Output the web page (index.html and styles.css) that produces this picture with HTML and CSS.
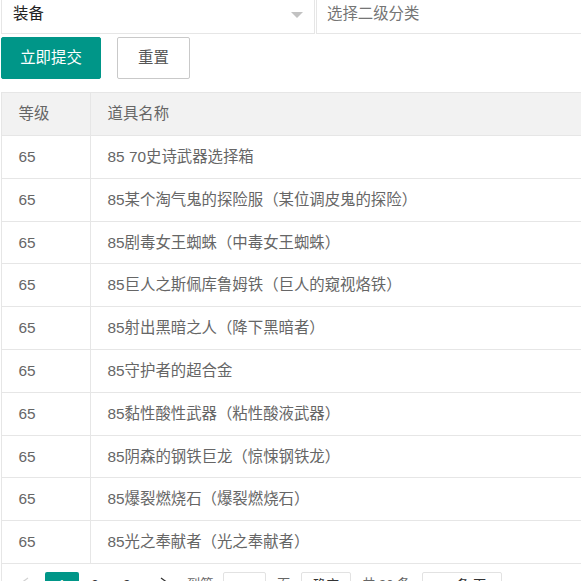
FILE: index.html
```html
<!DOCTYPE html>
<html lang="zh-CN">
<head>
<meta charset="utf-8">
<title>道具列表</title>
<link rel="stylesheet" href="styles.css">
</head>
<body>
<div class="page">
  <div class="form-row">
    <div class="select">
      <span class="select-value">装备</span>
      <i class="caret"></i>
    </div>
    <div class="input2">选择二级分类</div>
  </div>
  <div class="btn-row">
    <button class="btn btn-primary">立即提交</button>
    <button class="btn btn-default">重置</button>
  </div>
  <div class="table-box">
    <table class="data-table">
      <thead>
        <tr><th class="col-lv">等级</th><th class="col-name">道具名称</th></tr>
      </thead>
      <tbody>
        <tr><td class="col-lv">65</td><td class="col-name">85 70史诗武器选择箱</td></tr>
        <tr><td class="col-lv">65</td><td class="col-name">85某个淘气鬼的探险服（某位调皮鬼的探险）</td></tr>
        <tr><td class="col-lv">65</td><td class="col-name">85剧毒女王蜘蛛（中毒女王蜘蛛）</td></tr>
        <tr><td class="col-lv">65</td><td class="col-name">85巨人之斯佩库鲁姆铁（巨人的窥视烙铁）</td></tr>
        <tr><td class="col-lv">65</td><td class="col-name">85射出黑暗之人（降下黑暗者）</td></tr>
        <tr><td class="col-lv">65</td><td class="col-name">85守护者的超合金</td></tr>
        <tr><td class="col-lv">65</td><td class="col-name">85黏性酸性武器（粘性酸液武器）</td></tr>
        <tr><td class="col-lv">65</td><td class="col-name">85阴森的钢铁巨龙（惊悚钢铁龙）</td></tr>
        <tr><td class="col-lv">65</td><td class="col-name">85爆裂燃烧石（爆裂燃烧石）</td></tr>
        <tr><td class="col-lv">65</td><td class="col-name">85光之奉献者（光之奉献者）</td></tr>
      </tbody>
    </table>
    <div class="table-page">
      <span class="pg-prev"><svg width="9" height="12" viewBox="0 0 9 12"><polyline points="8,1 1,6 8,11" fill="none" stroke="#d2d2d2" stroke-width="1.3"/></svg></span>
      <span class="pg-curr">1</span>
      <span class="pg-num">2</span>
      <span class="pg-num">3</span>
      <span class="pg-next"><svg width="9" height="12" viewBox="0 0 9 12"><polyline points="1,1 8,6 1,11" fill="none" stroke="#333" stroke-width="1.3"/></svg></span>
      <span class="pg-text pg-to">到第</span>
      <span class="pg-input">1</span>
      <span class="pg-text pg-page">页</span>
      <span class="pg-btn">确定</span>
      <span class="pg-text pg-count">共 30 条</span>
      <span class="pg-limit">10 条/页</span>
    </div>
  </div>
</div>
</body>
</html>
```
FILE: styles.css
```css
html, body {
  margin: 0;
  padding: 0;
  overflow: hidden;
  background: #fff;
}
body {
  font-family: "Liberation Sans", "Noto Sans CJK SC", sans-serif;
  font-size: 15.4px;
  color: #666;
}
.page {
  padding-left: 1px;
  width: 640px;
}
.form-row {
  display: flex;
  margin-top: -8px;
}
.select {
  position: relative;
  box-sizing: border-box;
  width: 314px;
  height: 42px;
  border: 1px solid #e6e6e6;
  padding: 2px 0 0 11px;
  line-height: 38px;
  color: #222;
}
.caret {
  position: absolute;
  right: 11px;
  top: 19px;
  width: 0;
  height: 0;
  border: 6px solid transparent;
  border-top-color: #c2c2c2;
  border-bottom-width: 0;
}
.input2 {
  box-sizing: border-box;
  width: 300px;
  height: 42px;
  margin-left: 1px;
  border: 1px solid #e6e6e6;
  padding: 2px 0 0 10px;
  line-height: 38px;
  color: #757575;
}
.btn-row {
  display: flex;
  margin-top: 3px;
}
.btn {
  box-sizing: border-box;
  height: 42px;
  padding: 0;
  border-radius: 2px;
  font-family: inherit;
  font-size: 15.4px;
  line-height: 40px;
  text-align: center;
  white-space: nowrap;
  cursor: pointer;
}
.btn-primary {
  width: 100px;
  background: #009688;
  border: 1px solid #009688;
  color: #fff;
}
.btn-default {
  width: 73px;
  margin-left: 16px;
  background: #fff;
  border: 1px solid #c9c9c9;
  color: #555;
}
.table-box {
  margin-top: 13px;
  border-left: 1px solid #e6e6e6;
  border-top: 1px solid #e6e6e6;
}
.data-table {
  border-collapse: separate;
  border-spacing: 0;
  width: 639px;
}
.data-table th, .data-table td {
  padding: 0 16.5px;
  text-align: left;
  font-weight: normal;
  color: #666;
  border-right: 1px solid #e6e6e6;
  border-bottom: 1px solid #e6e6e6;
  white-space: nowrap;
}
.data-table th {
  background: #f2f2f2;
  line-height: 42px;
}
.data-table td {
  line-height: 41.8px;
}
.data-table .col-lv {
  width: 55px;
}
.table-page {
  display: flex;
  align-items: flex-start;
  padding-top: 8px;
  height: 30px;
  font-size: 13.2px;
  color: #333;
}
.table-page > span {
  box-sizing: border-box;
  height: 28.6px;
  line-height: 25px;
  text-align: center;
  white-space: nowrap;
}
.pg-prev {
  margin-left: 18px;
  width: 9px;
  padding-top: 5px;
}
.pg-prev svg, .pg-next svg {
  display: block;
}
.pg-curr {
  margin-left: 16px;
  width: 34px;
  background: #009688;
  color: #fff;
  border-radius: 2px;
}
.pg-num {
  width: 32px;
}
.pg-next {
  margin-left: 17px;
  width: 9px;
  padding-top: 5px;
}
.pg-text {
  color: #666;
}
.pg-to {
  margin-left: 18px;
}
.pg-input {
  margin-left: 9.6px;
  width: 43px;
  border: 1px solid #e2e2e2;
  border-radius: 2px;
}
.pg-page {
  margin-left: 11px;
}
.pg-btn {
  margin-left: 11px;
  width: 50px;
  border: 1px solid #e2e2e2;
  border-radius: 2px;
}
.pg-count {
  margin-left: 11px;
}
.pg-limit {
  margin-left: 11.5px;
  width: 80px;
  border: 1px solid #e2e2e2;
  border-radius: 2px;
}
```
